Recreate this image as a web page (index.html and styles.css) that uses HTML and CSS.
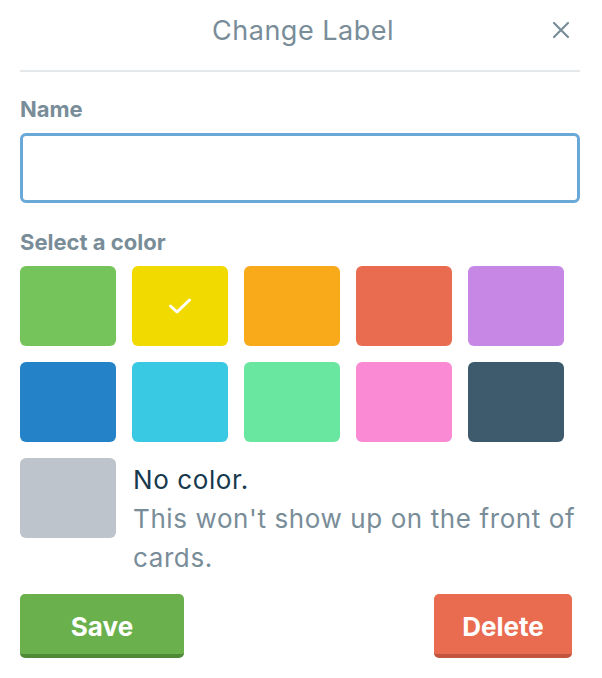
FILE: index.html
```html
<!DOCTYPE html>
<html lang="en">
<head>
<meta charset="utf-8">
<title>Change Label</title>
<link rel="stylesheet" href="styles.css">
</head>
<body>
<div class="popover">
  <div class="header">
    <span class="title">Change Label</span>
    <button class="close" aria-label="Close">
      <svg width="18" height="18" viewBox="0 0 18 18"><path d="M2 2 L16 16 M16 2 L2 16" stroke="#798d99" stroke-width="2.2" stroke-linecap="round"/></svg>
    </button>
  </div>
  <label class="field-label" for="name">Name</label>
  <input id="name" class="name-input" type="text">
  <div class="field-label">Select a color</div>
  <div class="swatches">
    <span class="swatch green"></span>
    <span class="swatch yellow">
      <svg width="26" height="20" viewBox="0 0 26 20"><path d="M3.5 10 L10 16 L22.5 4" fill="none" stroke="#fff" stroke-width="3" stroke-linecap="round" stroke-linejoin="round"/></svg>
    </span>
    <span class="swatch orange"></span>
    <span class="swatch red"></span>
    <span class="swatch purple"></span>
    <span class="swatch blue"></span>
    <span class="swatch sky"></span>
    <span class="swatch lime"></span>
    <span class="swatch pink"></span>
    <span class="swatch black"></span>
  </div>
  <div class="no-color">
    <span class="swatch none"></span>
    <p class="no-color-text"><span class="strong">No color.</span><br>This won't show up on the front of cards.</p>
  </div>
  <div class="actions">
    <button class="btn save">Save</button>
    <button class="btn delete">Delete</button>
  </div>
</div>
</body>
</html>
```
FILE: styles.css
```css
* { box-sizing: border-box; }
html, body { margin: 0; padding: 0; background: #fff; }
body {
  font-family: Inter, Roboto, "Liberation Sans", Arial, sans-serif;
  color: #798d99;
}
.popover {
  width: 602px;
  padding: 0 22px 20px 20px;
}
.header {
  position: relative;
  height: 72px;
  display: flex;
  align-items: center;
  justify-content: center;
  border-bottom: 2px solid #e4e8eb;
  padding: 0 0 10px 6px;
}
.title {
  font-size: 27px;
  letter-spacing: 0.5px;
  color: #798d99;
}
.close {
  position: absolute;
  right: 10px;
  top: 21px;
  border: 0;
  background: none;
  padding: 0;
  width: 18px;
  height: 18px;
  display: flex;
}
.field-label {
  display: block;
  font-size: 22px;
  font-weight: 700;
  color: #798d99;
  line-height: 26px;
}
label.field-label { margin-top: 24px; margin-bottom: 11px; }
.name-input {
  display: block;
  width: 100%;
  height: 70px;
  border: 3px solid #6aa8d7;
  border-radius: 6px;
  outline: none;
  margin: 0 0 26px 0;
}
.swatches {
  display: grid;
  grid-template-columns: repeat(5, 96px);
  grid-auto-rows: 80px;
  gap: 16px;
  margin-top: 11px;
}
.swatch {
  display: flex;
  align-items: center;
  justify-content: center;
  width: 96px;
  height: 80px;
  border-radius: 6px;
}
.green { background: #75c35b; }
.yellow { background: #f0da00; }
.orange { background: #f9aa1a; }
.red { background: #e96c51; }
.purple { background: #c787e4; }
.blue { background: #2482c8; }
.sky { background: #39c9e3; }
.lime { background: #69e7a1; }
.pink { background: #fb8ad4; }
.black { background: #3e5b6e; }
.none { background: #bdc4cb; flex: none; }
.no-color {
  display: flex;
  gap: 17px;
  margin-top: 16px;
}
.no-color-text {
  margin: 2px 0 0 0;
  font-size: 26px;
  line-height: 39px;
  letter-spacing: 0.6px;
  color: #798d99;
}
.strong { color: #17394d; }
.actions {
  display: flex;
  justify-content: space-between;
  margin-top: 17px;
  padding-right: 8px;
}
.btn {
  border: 0;
  border-radius: 5px;
  color: #fff;
  font-family: Inter, Roboto, "Liberation Sans", Arial, sans-serif;
  font-size: 26px;
  font-weight: 700;
  padding: 4px 0 0 0;
  height: 64px;
}
.save { width: 164px; background: #6ab04c; border-bottom: 4px solid #4e8a35; }
.delete { width: 138px; background: #e96c51; border-bottom: 4px solid #c2533c; }
```
